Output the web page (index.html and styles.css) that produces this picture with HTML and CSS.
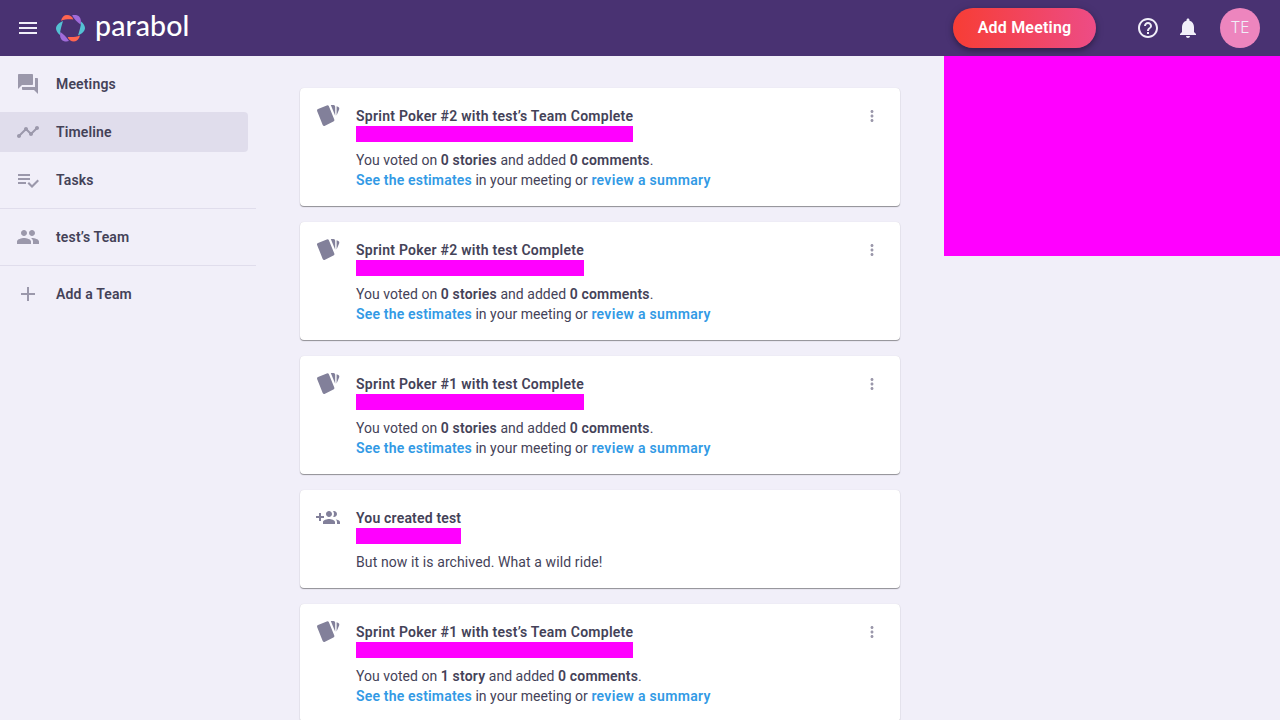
FILE: index.html
```html
<!DOCTYPE html>
<html lang="en">
<head>
<meta charset="utf-8">
<title>Timeline | Parabol</title>
<link rel="stylesheet" href="styles.css">
</head>
<body>
<svg class="defs" aria-hidden="true">
  <symbol id="cards" viewBox="0 0 24 24"><path d="M2 5 10.800 1.400q1.500-.5 2.100.8l5.400 13.200q.5 1.500-.9 2.100L9 21.700q-1.600.6-2.300-.8L1.100 7.100Q.6 5.700 2 5z"/><path d="M14.800 1h2.700q1.700.1 1.700 1.700v9z"/><path d="m20.600 2.300 1.800.8q1.400.7.8 2.100l-2.600 6.400z"/></symbol>
  <symbol id="dots" viewBox="0 0 24 24"><path d="M12 8c1.1 0 2-.9 2-2s-.9-2-2-2-2 .9-2 2 .9 2 2 2zm0 2c-1.1 0-2 .9-2 2s.9 2 2 2 2-.9 2-2-.9-2-2-2zm0 6c-1.1 0-2 .9-2 2s.9 2 2 2 2-.9 2-2-.9-2-2-2z"/></symbol>
</svg>
<header class="topbar">
  <svg class="icon menu" viewBox="0 0 24 24"><path d="M3 18h18v-2H3v2zm0-5h18v-2H3v2zm0-7v2h18V6H3z"/></svg>
  <svg class="mark" viewBox="0 0 31 28">
    <g id="petals">
      <path fill="#ff6550" d="M6 6.800C7 3 9 1 12 1s5.500 1.700 6.300 4.500C14 5 10 5.300 6 6.800z"/>
      <path fill="#a06bda" d="M17 1.300C20 .600 23 1 24.500 3c1.500 2 1.800 4.500 1.100 7.500-3-2-6.100-4.800-8.600-9.200z"/>
      <path fill="#54c1d3" d="M26 7.500c2.500 2 4 4.500 4 6.500 0 3-3 5.800-7 7.500 1-4 3-8.500 3-14z"/>
    </g>
    <use href="#petals" transform="rotate(180 15.500 14.200)"/>
  </svg>
  <span class="wordmark">parabol</span>
  <button class="add">Add Meeting</button>
  <svg class="icon help" viewBox="0 0 24 24"><path d="M11 18h2v-2h-2v2zm1-16C6.48 2 2 6.48 2 12s4.480 10 10 10 10-4.480 10-10S17.520 2 12 2zm0 18c-4.410 0-8-3.590-8-8s3.590-8 8-8 8 3.590 8 8-3.590 8-8 8zm0-14c-2.210 0-4 1.790-4 4h2c0-1.100.9-2 2-2s2 .9 2 2c0 2-3 1.750-3 5h2c0-2.250 3-2.500 3-5 0-2.210-1.790-4-4-4z"/></svg>
  <svg class="icon bell" viewBox="0 0 24 24"><path d="M12 22c1.100 0 2-.9 2-2h-4c0 1.100.9 2 2 2zm6-6v-5c0-3.070-1.640-5.640-4.500-6.320V4c0-.83-.67-1.500-1.500-1.500s-1.500.67-1.500 1.500v.68C7.630 5.360 6 7.920 6 11v5l-2 2v1h16v-1l-2-2z"/></svg>
  <span class="avatar">TE</span>
</header>
<div class="page">
  <nav class="nav">
    <a class="item"><svg class="icon" viewBox="0 0 24 24"><path d="M21 6h-2v9H6v2c0 .55.45 1 1 1h11l4 4V7c0-.55-.45-1-1-1zm-4 6V3c0-.55-.45-1-1-1H3c-.55 0-1 .45-1 1v14l4-4h10c.55 0 1-.45 1-1z"/></svg><span>Meetings</span></a>
    <a class="item active"><svg class="icon" viewBox="0 0 24 24"><path d="M23 8c0 1.100-.9 2-2 2-.18 0-.35-.02-.51-.07l-3.560 3.550c.05.16.07.34.07.52 0 1.100-.9 2-2 2s-2-.9-2-2c0-.18.02-.36.07-.52l-2.550-2.550c-.16.05-.34.07-.52.07s-.36-.02-.52-.07l-4.550 4.560c.05.16.07.33.07.51 0 1.100-.9 2-2 2s-2-.9-2-2 .9-2 2-2c.18 0 .35.02.51.07l4.560-4.550C8.020 9.360 8 9.180 8 9c0-1.100.9-2 2-2s2 .9 2 2c0 .18-.02.36-.07.52l2.550 2.550c.16-.05.34-.07.52-.07s.36.02.52.07l3.550-3.560C19.020 8.350 19 8.180 19 8c0-1.100.9-2 2-2s2 .9 2 2z"/></svg><span>Timeline</span></a>
    <a class="item"><svg class="icon" viewBox="0 0 24 24"><path d="M14 10H2v2h12v-2zm0-4H2v2h12V6zM2 16h8v-2H2v2zm19.500-4.500L23 13l-6.990 7-4.510-4.500L13 14l3.010 3 5.490-5.500z"/></svg><span>Tasks</span></a>
    <hr>
    <a class="item"><svg class="icon" viewBox="0 0 24 24"><path d="M16 11c1.660 0 2.990-1.340 2.990-3S17.660 5 16 5s-3 1.340-3 3 1.340 3 3 3zm-8 0c1.660 0 2.990-1.340 2.990-3S9.660 5 8 5 5 6.340 5 8s1.340 3 3 3zm0 2c-2.330 0-7 1.170-7 3.500V19h14v-2.500c0-2.330-4.670-3.500-7-3.500zm8 0c-.29 0-.62.02-.97.050 1.160.840 1.970 1.970 1.970 3.450V19h6v-2.500c0-2.330-4.670-3.500-7-3.500z"/></svg><span>test’s Team</span></a>
    <hr>
    <a class="item"><svg class="icon" viewBox="0 0 24 24"><path d="M19 13h-6v6h-2v-6H5v-2h6V5h2v6h6v2z"/></svg><span>Add a Team</span></a>
  </nav>
  <main class="feed">
    <article class="card"><svg class="icon kind"><use href="#cards"/></svg><div class="body"><div class="title"><b>Sprint Poker #2 with test’s Team Complete</b><i class="date"></i></div><p>You voted on <b>0 stories</b> and added <b>0 comments</b>.</p><p><a>See the estimates</a> in your meeting or <a class="summary">review a summary</a></p></div><svg class="more"><use href="#dots"/></svg></article>
    <article class="card"><svg class="icon kind"><use href="#cards"/></svg><div class="body"><div class="title"><b>Sprint Poker #2 with test Complete</b><i class="date"></i></div><p>You voted on <b>0 stories</b> and added <b>0 comments</b>.</p><p><a>See the estimates</a> in your meeting or <a class="summary">review a summary</a></p></div><svg class="more"><use href="#dots"/></svg></article>
    <article class="card"><svg class="icon kind"><use href="#cards"/></svg><div class="body"><div class="title"><b>Sprint Poker #1 with test Complete</b><i class="date"></i></div><p>You voted on <b>0 stories</b> and added <b>0 comments</b>.</p><p><a>See the estimates</a> in your meeting or <a class="summary">review a summary</a></p></div><svg class="more"><use href="#dots"/></svg></article>
    <article class="card"><svg class="icon kind" viewBox="0 0 24 24"><path d="M8 10H5V7H3v3H0v2h3v3h2v-3h3v-2zm10 1c1.660 0 2.990-1.340 2.990-3S19.660 5 18 5c-.32 0-.63.050-.91.140.57.810.9 1.790.9 2.860s-.34 2.040-.9 2.860c.28.090.59.140.91.140zm-5 0c1.660 0 2.990-1.340 2.990-3S14.660 5 13 5s-3 1.340-3 3 1.340 3 3 3zm6.620 2.160c.83.730 1.380 1.660 1.380 2.840v2h3v-2c0-1.540-2.370-2.490-4.380-2.840zM13 13c-2 0-6 1-6 3v2h12v-2c0-2-4-3-6-3z"/></svg><div class="body"><div class="title created"><b>You created test</b><i class="date"></i></div><p class="archived">But now it is archived. What a wild ride!</p></div></article>
    <article class="card"><svg class="icon kind"><use href="#cards"/></svg><div class="body"><div class="title"><b>Sprint Poker #1 with test’s Team Complete</b><i class="date"></i></div><p>You voted on <b>1 story</b> and added <b>0 comments</b>.</p><p><a>See the estimates</a> in your meeting or <a class="summary">review a summary</a></p></div><svg class="more"><use href="#dots"/></svg></article>
  </main>
  <aside class="panel"></aside>
</div>
</body>
</html>
```
FILE: styles.css
```css
* { box-sizing: border-box; }
body { margin: 0; height: 720px; overflow: hidden; background: #f1eff9; color: #444258; font: 14px/20px Roboto, sans-serif; }
.defs { display: none; }
.icon { width: 24px; height: 24px; flex: none; fill: currentColor; }
.topbar { height: 56px; display: flex; align-items: center; padding: 0 20px 0 16px; background: #493272; color: #f1eff9; }
.mark { width: 31px; height: 28px; margin-left: 15px; flex: none; }
.wordmark { margin-left: 9px; font: 500 28.5px/38px Lato, sans-serif; letter-spacing: .1px; color: #fff; width: 96px; height: 44px; }
.add { margin-left: auto; width: 143px; height: 40px; border: 0; padding: 0; border-radius: 20px; background: linear-gradient(to right, #f73d35, #ed4c86); color: #fff; font: 600 16px/24px Roboto, sans-serif; letter-spacing: .2px; box-shadow: 0 3px 5px rgba(0,0,0,.25), 0 1px 10px rgba(0,0,0,.15); }
.help { margin-left: 40px; }
.bell { margin-left: 16px; }
.avatar { width: 40px; height: 40px; margin-left: 20px; border-radius: 50%; background: #ed85be; font: 300 15.500px/40px Inter, sans-serif; text-align: center; }
.page { display: flex; height: 664px; }
.nav { width: 256px; padding-top: 8px; flex: none; }
.item { display: flex; align-items: center; width: 248px; height: 40px; padding-left: 16px; margin-bottom: 8px; gap: 16px; font-weight: 600; letter-spacing: .15px; border-radius: 0 4px 4px 0; }
.item .icon { color: #9b98ab; }
.active { background: #e0ddec; }
.nav hr { height: 1px; border: 0; margin: 0 0 8px; background: #e0ddec; }
.feed { width: 600px; margin: 32px 44px 0; flex: none; }
.card { display: flex; padding: 16px 16px 14px; margin-bottom: 16px; background: #fff; border-radius: 4px; box-shadow: 0 1px 1px rgba(0,0,0,.4), 0 0 1px rgba(0,0,0,.12); }
.kind { color: #82809a; }
.body { flex: 1; margin-left: 16px; padding: 2px 0; }
.title { display: flex; flex-direction: column; width: fit-content; margin-bottom: 8px; }
b, .body a { font-weight: 600; letter-spacing: .18px; }
.title b { letter-spacing: .26px; }
.created b { letter-spacing: .18px; }
.date { height: 16px; background: #f0f; }
.body p { margin: 0; letter-spacing: .03px; }
.body .archived { letter-spacing: .1px; }
.body a { color: #329ae5; }
.body .summary { letter-spacing: .32px; }
.more { width: 18px; height: 18px; margin: 3px 3px 0 0; fill: #9b98ab; }
.panel { width: 336px; height: 200px; background: #f0f; }
```
